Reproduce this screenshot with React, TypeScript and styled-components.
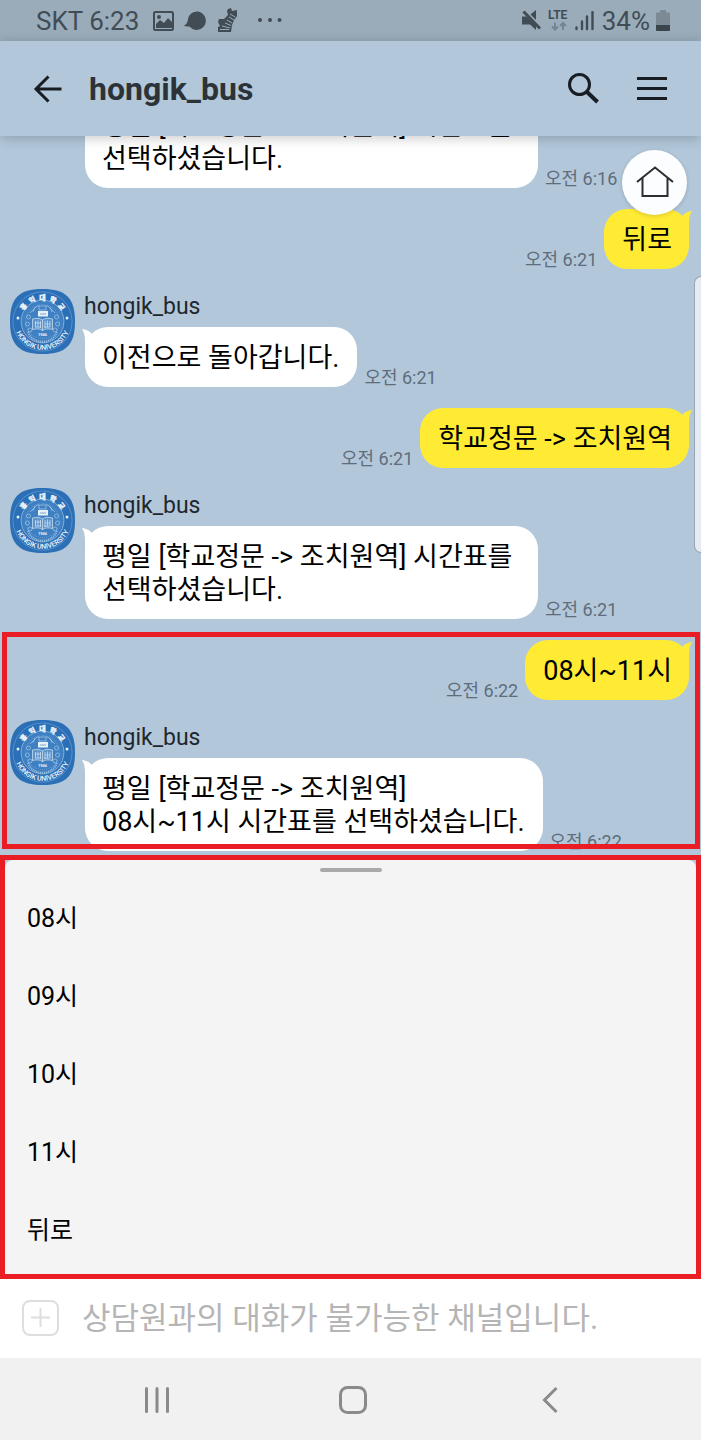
import React, { useId } from "react";
import styled, { createGlobalStyle } from "styled-components";

const GlobalStyle = createGlobalStyle`
  *, *::before, *::after { box-sizing: border-box; }
  body {
    margin: 0;
    font-family: Roboto, "Noto Sans CJK KR", sans-serif;
    color: #000;
    background: #b2c7da;
  }
  button {
    font: inherit;
    color: inherit;
    padding: 0;
    border: 0;
    background: none;
  }
  svg { display: block; flex: none; }
`;

const Page = styled.div`
  display: flex;
  flex-direction: column;
  height: 100vh;
  overflow: hidden;
`;

const StatusBar = styled.div`
  display: flex;
  flex: none;
  align-items: center;
  justify-content: space-between;
  height: 41px;
  padding: 0 31px 0 36px;
  background: #9aacba;
  color: #414c54;
  font-size: 26px;
  line-height: 40px;
`;

const StatusGroup = styled.div<{ $gap: number }>`
  display: flex;
  align-items: center;
  gap: ${(p) => p.$gap}px;
`;

const Header = styled.header`
  position: relative;
  z-index: 2;
  display: flex;
  flex: none;
  align-items: center;
  height: 95px;
  padding: 0 34px 0 33px;
  background: #b2c7da;
  box-shadow: 0 2px 12px rgba(0, 0, 0, 0.22);
`;

const Title = styled.h1`
  flex: 1;
  margin: 0 0 0 26px;
  font-size: 32px;
  line-height: 40px;
  font-weight: 700;
  color: #2c3338;
`;

const HeaderActions = styled.div`
  display: flex;
  align-items: center;
  gap: 38px;
`;

const Chat = styled.main`
  position: relative;
  display: flex;
  flex: 1;
  flex-direction: column;
  justify-content: flex-end;
  min-height: 0;
  padding-bottom: 4px;
  overflow: hidden;
`;

const HomeButton = styled.button`
  position: absolute;
  top: 14px;
  right: 14px;
  z-index: 1;
  display: grid;
  place-items: center;
  width: 65px;
  height: 65px;
  border-radius: 50%;
  background: #fcfdfe;
  box-shadow: 0 1px 4px rgba(0, 0, 0, 0.16);
`;

const EdgeHandle = styled.div`
  position: absolute;
  top: 140px;
  right: 0;
  width: 7px;
  height: 277px;
  border: 1px solid #98a5b2;
  border-right: 0;
  border-radius: 8px 0 0 8px;
  background: #e6ebf1;
`;

const Incoming = styled.div`
  display: flex;
  flex: none;
  gap: 10px;
  margin-top: 20px;
  padding: 0 10px;
`;

const IncomingBody = styled.div`
  flex: 1;
  min-width: 0;
`;

const AvatarSlot = styled.div`
  width: 65px;
`;

const Sender = styled.div`
  height: 38px;
  margin-left: -1px;
  font-size: 23px;
  line-height: 35px;
  color: #1f272e;
`;

const BubbleLine = styled.div<{ $mine?: boolean }>`
  display: flex;
  align-items: flex-end;
  gap: 7px;
  justify-content: ${(p) => (p.$mine ? "flex-end" : "flex-start")};
`;

const Outgoing = styled(BubbleLine)`
  flex: none;
  margin-top: 21px;
  padding: 0 12px;
`;

const BubbleBox = styled.div<{ $mine?: boolean; $maxWidth?: number }>`
  position: relative;
  max-width: ${(p) => p.$maxWidth ?? 459}px;
  padding: ${(p) => (p.$mine ? "15px 17px 12px 18px" : "15px 18px 12px 17px")};
  border-radius: 23px;
  background: ${(p) => (p.$mine ? "#ffeb33" : "#fff")};
  font-size: 27px;
  line-height: 33px;
  word-break: keep-all;
`;

const Tail = styled.svg<{ $mine?: boolean }>`
  position: absolute;
  top: 2px;
  ${(p) => (p.$mine ? "right: -3px;" : "left: -3px;")}
  fill: ${(p) => (p.$mine ? "#ffeb33" : "#fff")};
`;

const Time = styled.time`
  font-size: 18px;
  line-height: 18px;
  color: #5f6d7a;
  white-space: nowrap;
`;

const MarkedGroup = styled.section`
  position: relative;
  flex: none;
  &::after {
    content: "";
    position: absolute;
    inset: 13px 1px 2px 2px;
    border: 5px solid #ea1c24;
    pointer-events: none;
  }
`;

const SheetFrame = styled.section`
  flex: none;
  border: 5px solid #ea1c24;
  background: #b2c7da;
`;

const Sheet = styled.div`
  display: flex;
  flex-direction: column;
  padding: 8px 0 4px;
  border-radius: 8px 8px 0 0;
  background: #f4f4f4;
`;

const Grip = styled.div`
  align-self: center;
  width: 62px;
  height: 4px;
  margin-bottom: 8px;
  border-radius: 2px;
  background: #a9a9a9;
`;

const Choice = styled.button`
  height: 78px;
  padding: 0 22px;
  font-size: 25px;
  line-height: 32px;
  text-align: left;
`;

const Composer = styled.form`
  display: flex;
  flex: none;
  align-items: center;
  gap: 23px;
  height: 79px;
  padding: 0 22px;
  background: #fff;
`;

const MessageInput = styled.input`
  flex: 1;
  min-width: 0;
  height: 48px;
  padding: 0;
  border: 0;
  background: none;
  font: inherit;
  font-size: 31px;
  line-height: 48px;
  &::placeholder {
    color: #b5b5b5;
    opacity: 1;
  }
`;

const NavBar = styled.nav`
  display: grid;
  flex: none;
  grid-template-columns: repeat(3, 1fr);
  height: 82px;
  padding: 2px 53px 0 59px;
  background: #f1f1f1;
`;

const NavButton = styled.button`
  display: grid;
  place-items: center;
`;

const SEAL_LETTERS = ["홍", "익", "대", "학", "교"];

function Avatar() {
  const arc = useId();
  return (
    <svg width="65" height="65" viewBox="0 0 65 65" role="img" aria-label="hongik_bus">
      <path
        d="M32.5 0C56 0 65 9 65 32.5S56 65 32.5 65 0 56 0 32.5 9 0 32.5 0Z"
        fill="#2b6fb7"
      />
      <circle cx="32.500" cy="32.500" r="21" fill="#3f80c2" />
      <g fill="none" stroke="#a9c9e8" strokeWidth="0.7">
        <circle cx="32.5" cy="32.5" r="29.6" opacity="0.5" />
        <circle cx="32.5" cy="32.5" r="21.4" />
        <circle cx="32.5" cy="32.5" r="17" opacity="0.5" strokeDasharray="1 1" />
        <path d="M20 24l7-7h11l7 7M25 18l-2 5M40 18l2 5M29 17v4h7v-4" />
        <circle cx="18.5" cy="28" r="2" />
        <circle cx="46.5" cy="28" r="2" />
        <circle cx="17.5" cy="35" r="2" />
        <circle cx="47.5" cy="35" r="2" />
        <circle cx="20" cy="41" r="2" />
        <circle cx="45" cy="41" r="2" />
        <path
          d="M22.500 30v10.500c4-1 7.500-1 10 1 2.500-2 6-2 10-1V30c-4-1-7.500-1-10 1-2.500-2-6-2-10-1ZM32.500 31v11"
          fill="#5c94cd"
          stroke="#d5e5f4"
        />
        <path d="M25.500 32v6M28 31.500v7M30.500 32v7M35 32v7M37.500 31.500v7M40 32v6M25 34h6M35 35h5M25 38h6M34 38h6" stroke="#d5e5f4" />
        <path d="M18 43c5 13 24 13 29 0" strokeWidth="2" strokeDasharray="1.200 0.800" opacity="0.8" />
      </g>
      <path d="M28 22h10v5.500H28z" fill="#e6f0f9" />
      <path d="M30 25h6" stroke="#7fa9d4" strokeWidth="1" />
      <circle cx="8" cy="29" r="1.500" fill="#e6f0f9" />
      <circle cx="57" cy="29" r="1.500" fill="#e6f0f9" />
      <g fill="#eef5fb" textAnchor="middle">
        {SEAL_LETTERS.map((letter, i) => (
          <text
            key={letter}
            x="32.5"
            y="11"
            fontSize="7"
            fontWeight="900"
            stroke="#eef5fb"
            strokeWidth="0.3"
            transform={`rotate(${(i - 2) * 26} 32.5 32.5)`}
          >
            {letter}
          </text>
        ))}
        <text x="32.5" y="46.500" fontSize="4" fontWeight="700">
          1946
        </text>
        <path id={arc} d="M4.200 32.500a28.300 28.300 0 0 0 56.600 0" fill="none" />
        <text fontSize="7" fontWeight="500">
          <textPath href={`#${arc}`} startOffset="50%">
            HONGIK UNIVERSITY
          </textPath>
        </text>
      </g>
    </svg>
  );
}

type BubbleProps = {
  mine?: boolean;
  tail?: boolean;
  maxWidth?: number;
  children: React.ReactNode;
};

function Bubble({ mine, tail = true, maxWidth, children }: BubbleProps) {
  return (
    <BubbleBox $mine={mine} $maxWidth={maxWidth}>
      {tail && (
        <Tail $mine={mine} width="14" height="20" viewBox="0 0 14 20" aria-hidden="true">
          <path
            d={
              mine
                ? "M14 0C10 0.500 7 2 5 4L2 8l9 12V12C11 7 12 3 14 0Z"
                : "M0 0C4 0.500 7 2 9 4l3 4L3 20V12C3 7 2 3 0 0Z"
            }
          />
        </Tail>
      )}
      {children}
    </BubbleBox>
  );
}

function Received({ time, maxWidth, children }: { time: string; maxWidth?: number; children: React.ReactNode }) {
  return (
    <Incoming>
      <Avatar />
      <IncomingBody>
        <Sender>hongik_bus</Sender>
        <BubbleLine>
          <Bubble maxWidth={maxWidth}>{children}</Bubble>
          <Time>오전 {time}</Time>
        </BubbleLine>
      </IncomingBody>
    </Incoming>
  );
}

function Sent({ time, children }: { time: string; children: React.ReactNode }) {
  return (
    <Outgoing $mine>
      <Time>오전 {time}</Time>
      <Bubble mine>{children}</Bubble>
    </Outgoing>
  );
}

function NotificationIcons() {
  return (
    <>
      <svg width="21" height="20" viewBox="0 0 21 20" aria-hidden="true">
        <rect x="1" y="1" width="19" height="18" rx="1.500" fill="none" stroke="#414c54" strokeWidth="2" />
        <circle cx="6" cy="6" r="2" fill="#414c54" />
        <path d="M3 17v-4l4-4 4 3 4-5 4 4v6Z" fill="#414c54" />
      </svg>
      <svg width="23" height="20" viewBox="0 0 23 20" aria-hidden="true">
        <path d="M13 0.500a9.200 9.200 0 1 1-7.500 15C4 15.500 2 15.500 0 15c2-1.500 3-3 3.700-5A9.300 9.300 0 0 1 13 0.500Z" fill="#414c54" />
      </svg>
      <svg width="31" height="25" viewBox="0 0 31 25" aria-hidden="true">
        <path d="M11 1l3-1 1 3 5-1v6l-3 4-2 5-1 7H1l0-5 2-1-2-4 1-3 5 0 4-4-1-4Z" fill="#414c54" />
        <path d="M13 6l5 3M12 9l5 3M10 12l5 3M8 15l6 2.500M5 18l8 2M3 21.500h9" stroke="#9aacba" strokeWidth="1" />
      </svg>
      <svg width="24" height="6" viewBox="0 0 24 6" aria-hidden="true" fill="#414c54">
        <circle cx="2" cy="2" r="2" />
        <circle cx="12" cy="2" r="2" />
        <circle cx="21.500" cy="2" r="2" />
      </svg>
    </>
  );
}

function MuteIcon() {
  return (
    <svg width="20" height="21" viewBox="0 0 20 21" aria-hidden="true" fill="#414c54">
      <path d="M0 6.500h4.500L14 15v5l-6-5.500H0Z" />
      <path d="M8.500 4.500L14 0v10Z" />
      <path d="M1.500 1.500L18 18.500" stroke="#414c54" strokeWidth="3" />
    </svg>
  );
}

function NetworkIcon() {
  return (
    <svg width="21" height="23" viewBox="0 0 21 23" role="img" aria-label="LTE">
      <text x="0" y="10" fontSize="12" fontWeight="700" fill="#414c54">
        LTE
      </text>
      <path d="M7 13.500v7M4 17.500l3 3 3-3M15 21v-7M12 17l3-3 3 3" fill="none" stroke="#75858f" strokeWidth="2" />
    </svg>
  );
}

function SignalIcon() {
  return (
    <svg width="21" height="20" viewBox="0 0 21 20" aria-hidden="true">
      <path d="M1.500 16.500v1.500M7 10.500V18M12 5.500V18M17.500 1v17" stroke="#414c54" strokeWidth="2.400" strokeLinecap="round" />
    </svg>
  );
}

function BatteryIcon() {
  return (
    <svg width="14" height="22" viewBox="0 0 14 22" aria-hidden="true">
      <path d="M4 0h6v2.500h3a1 1 0 0 1 1 1V15H0V3.500a1 1 0 0 1 1-1h3Z" fill="#7b8a95" />
      <path d="M0 15h14v5a1 1 0 0 1-1 1H1a1 1 0 0 1-1-1Z" fill="#3a444b" />
    </svg>
  );
}

const CHOICES = ["08시", "09시", "10시", "11시", "뒤로"];

export default function App() {
  return (
    <Page>
      <GlobalStyle />
      <StatusBar>
        <StatusGroup $gap={14}>
          <span>SKT 6:23</span>
          <StatusGroup $gap={10}>
            <NotificationIcons />
          </StatusGroup>
        </StatusGroup>
        <StatusGroup $gap={6}>
          <MuteIcon />
          <NetworkIcon />
          <SignalIcon />
          <span>34%</span>
          <BatteryIcon />
        </StatusGroup>
      </StatusBar>

      <Header>
        <button type="button" aria-label="뒤로 가기">
          <svg width="30" height="30" viewBox="0 0 30 30" fill="none" stroke="#171d22" strokeWidth="3">
            <path d="M28.500 15H3M15.500 2.500L3 15l12.500 12.500" />
          </svg>
        </button>
        <Title>hongik_bus</Title>
        <HeaderActions>
          <button type="button" aria-label="검색">
            <svg width="32" height="32" viewBox="0 0 32 32" fill="none" stroke="#171d22">
              <circle cx="12.500" cy="11.500" r="10" strokeWidth="3" />
              <path d="M19.500 18.500L30.500 29" strokeWidth="4" />
            </svg>
          </button>
          <button type="button" aria-label="메뉴">
            <svg width="30" height="30" viewBox="0 0 30 30" stroke="#171d22" strokeWidth="3">
              <path d="M0 4.500h30M0 14.500h30M0 24.500h30" />
            </svg>
          </button>
        </HeaderActions>
      </Header>

      <Chat>
        <Incoming>
          <AvatarSlot />
          <IncomingBody>
            <BubbleLine>
              <Bubble tail={false} maxWidth={453}>
                평일 [학교정문 -&gt; 조치원역] 시간표를 선택하셨습니다.
              </Bubble>
              <Time>오전 6:16</Time>
            </BubbleLine>
          </IncomingBody>
        </Incoming>
        <Sent time="6:21">뒤로</Sent>
        <Received time="6:21">이전으로 돌아갑니다.</Received>
        <Sent time="6:21">학교정문 -&gt; 조치원역</Sent>
        <Received time="6:21" maxWidth={453}>
          평일 [학교정문 -&gt; 조치원역] 시간표를 선택하셨습니다.
        </Received>
        <MarkedGroup>
          <Sent time="6:22">08시~11시</Sent>
          <Received time="6:22">
            평일 [학교정문 -&gt; 조치원역]
            <br />
            08시~11시 시간표를 선택하셨습니다.
          </Received>
        </MarkedGroup>

        <HomeButton type="button" aria-label="홈">
          <svg width="38" height="36" viewBox="0 0 38 36" fill="none" stroke="#2b2f33" strokeWidth="2">
            <path d="M1 17L19 2.500l18 14.500M6.500 13V31h25V13" />
          </svg>
        </HomeButton>
        <EdgeHandle />
      </Chat>

      <SheetFrame>
        <Sheet>
          <Grip />
          {CHOICES.map((choice) => (
            <Choice key={choice} type="button">
              {choice}
            </Choice>
          ))}
        </Sheet>
      </SheetFrame>

      <Composer>
        <button type="button" aria-label="첨부">
          <svg width="37" height="37" viewBox="0 0 37 37" fill="none" stroke="#dedede">
            <rect x="1" y="1" width="35" height="34" rx="7" strokeWidth="2" />
            <path d="M9 17.500h19M18.500 8v19" strokeWidth="2" />
          </svg>
        </button>
        <MessageInput
          type="text"
          disabled
          aria-label="메시지"
          placeholder="상담원과의 대화가 불가능한 채널입니다."
        />
      </Composer>

      <NavBar>
        <NavButton type="button" aria-label="최근 앱">
          <svg width="26" height="28" viewBox="0 0 26 28" stroke="#8a8a8a" strokeWidth="3" strokeLinecap="round">
            <path d="M2.500 2.500v23M13 2.500v23M23.500 2.500v23" />
          </svg>
        </NavButton>
        <NavButton type="button" aria-label="홈 화면">
          <svg width="28" height="28" viewBox="0 0 28 28" fill="none" stroke="#8a8a8a" strokeWidth="3">
            <rect x="1.500" y="1.500" width="25" height="25" rx="7" />
          </svg>
        </NavButton>
        <NavButton type="button" aria-label="이전">
          <svg width="16" height="28" viewBox="0 0 16 28" fill="none" stroke="#8a8a8a" strokeWidth="3">
            <path d="M14.500 2L2.500 14l12 12" />
          </svg>
        </NavButton>
      </NavBar>
    </Page>
  );
}
